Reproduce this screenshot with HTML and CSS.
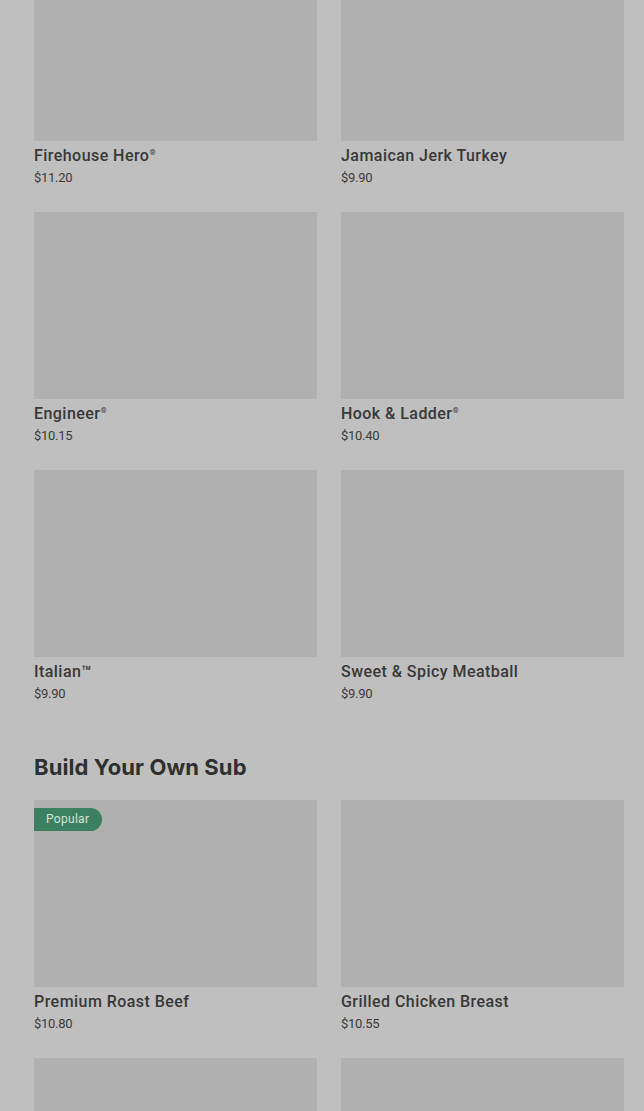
FILE: index.html
```html
<!DOCTYPE html>
<html>
<head>
<meta charset="utf-8">
<link rel="stylesheet" href="styles.css">
</head>
<body>
<div class="page">
  <section class="section">
    <div class="grid">
      <div class="card"><div class="img"></div><div class="name">Firehouse Hero<sup>®</sup></div><div class="price">$11.20</div></div>
      <div class="card"><div class="img"></div><div class="name">Jamaican Jerk Turkey</div><div class="price">$9.90</div></div>
      <div class="card"><div class="img"></div><div class="name">Engineer<sup>®</sup></div><div class="price">$10.15</div></div>
      <div class="card"><div class="img"></div><div class="name">Hook &amp; Ladder<sup>®</sup></div><div class="price">$10.40</div></div>
      <div class="card"><div class="img"></div><div class="name">Italian™</div><div class="price">$9.90</div></div>
      <div class="card"><div class="img"></div><div class="name">Sweet &amp; Spicy Meatball</div><div class="price">$9.90</div></div>
    </div>
  </section>
  <section class="section build">
    <h2 class="heading">Build Your Own Sub</h2>
    <div class="grid">
      <div class="card"><div class="img"><span class="badge">Popular</span></div><div class="name">Premium Roast Beef</div><div class="price">$10.80</div></div>
      <div class="card"><div class="img"></div><div class="name">Grilled Chicken Breast</div><div class="price">$10.55</div></div>
      <div class="card"><div class="img"></div><div class="name">&nbsp;</div><div class="price">&nbsp;</div></div>
      <div class="card"><div class="img"></div><div class="name">&nbsp;</div><div class="price">&nbsp;</div></div>
    </div>
  </section>
</div>
</body>
</html>
```
FILE: styles.css
```css
html, body {
  margin: 0;
  padding: 0;
  background: #bfbfbf;
  overflow: hidden;
}
body {
  font-family: Roboto, "Liberation Sans", sans-serif;
  color: #333;
}
.page {
  margin-top: -46px;
  padding: 0 20px 0 34px;
}
.grid {
  display: grid;
  grid-template-columns: 283px 283px;
  column-gap: 24px;
  row-gap: 24px;
}
.card {
  display: flex;
  flex-direction: column;
}
.img {
  position: relative;
  height: 187px;
  background: #b0b0b0;
}
.name {
  margin-top: 4px;
  font-size: 16px;
  line-height: 22px;
  font-weight: 500;
  color: #383838;
  letter-spacing: 0.45px;
}
.name sup {
  font-size: 8px;
  line-height: 0;
  vertical-align: 6px;
  letter-spacing: 0;
}
.price {
  margin-top: 1px;
  font-size: 13px;
  line-height: 20px;
  color: #3a3a3a;
  letter-spacing: -0.3px;
}
.build {
  margin-top: 49px;
}
.heading {
  margin: 0 0 19px 0;
  font-family: Inter, "Liberation Sans", sans-serif;
  font-size: 22px;
  line-height: 28px;
  font-weight: 700;
  color: #2f2f2f;
  letter-spacing: 0.1px;
}
.badge {
  position: absolute;
  top: 8px;
  left: 0;
  height: 23px;
  width: 68px;
  box-sizing: border-box;
  padding-left: 12px;
  background: #3b8060;
  color: #d3e4da;
  font-size: 12px;
  line-height: 23px;
  letter-spacing: 0.3px;
  border-radius: 0 12px 12px 0;
}
```
